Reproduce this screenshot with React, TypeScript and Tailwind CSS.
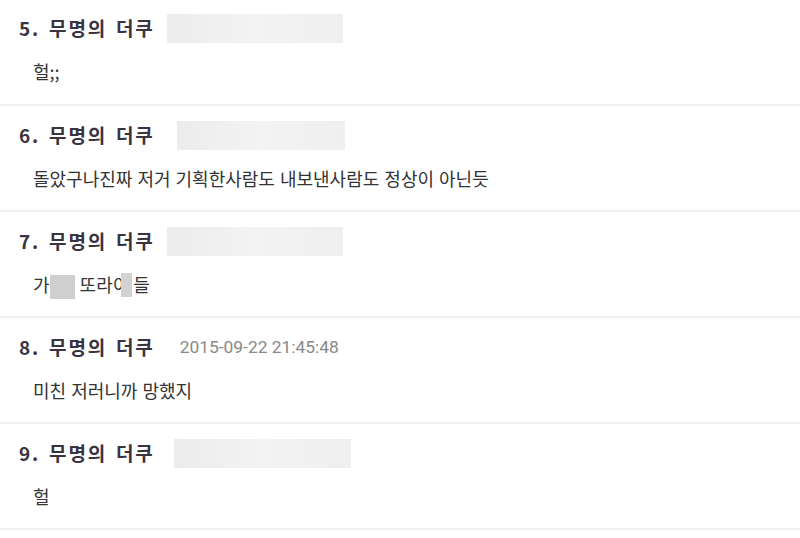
import React from "react";

type Comment = {
  no: number;
  meta: { kind: "blur"; left: number; width: number } | { kind: "date"; text: string };
  body: React.ReactNode;
};

function Censor({ w }: { w: number }) {
  return <span className="inline-block h-[24px] align-middle bg-[#cfcfcf]" style={{ width: w }} />;
}

const comments: Comment[] = [
  { no: 5, meta: { kind: "blur", left: 15, width: 176 }, body: "헐;;" },
  {
    no: 6,
    meta: { kind: "blur", left: 25, width: 168 },
    body: "돌았구나진짜 저거 기획한사람도 내보낸사람도 정상이 아닌듯",
  },
  {
    no: 7,
    meta: { kind: "blur", left: 15, width: 176 },
    body: (
      <>
        가<Censor w={25} /> 또라
        <span className="relative inline-block">
          이
          <span className="absolute right-[-3px] top-[3px] h-[24px] w-[11px] bg-[#d2d2d2]" />
        </span>
        <span className="ml-[4px]">들</span>
      </>
    ),
  },
  { no: 8, meta: { kind: "date", text: "2015-09-22 21:45:48" }, body: "미친 저러니까 망했지" },
  { no: 9, meta: { kind: "blur", left: 22, width: 177 }, body: "헐" },
];

export default function App() {
  return (
    <div className="w-[800px] h-[538px] overflow-hidden bg-white" style={{ fontFamily: '"Noto Sans CJK KR", "Noto Sans", sans-serif' }}>
      {comments.map((c, i) => (
        <div
          key={c.no}
          className={`h-[106px] border-b-2 border-[#efefef] pl-[19px] ${i === 0 ? "pt-[14px]" : "pt-[15px]"}`}
        >
          <div className="flex items-center h-[28px]">
            <span className="text-[19px] font-bold text-[#3a3340] leading-[28px] tracking-[1.8px] [word-spacing:3px]">
              {c.no}. 무명의 더쿠
            </span>
            {c.meta.kind === "blur" ? (
              <span
                className="h-[29px] bg-gradient-to-r from-[#ececec] via-[#f3f3f3] to-[#efefef]"
                style={{ marginLeft: c.meta.left - 3, width: c.meta.width }}
              />
            ) : (
              <span
                className="ml-[25px] text-[17.4px] text-[#888] leading-[28px]"
                style={{ fontFamily: '"Roboto", "Liberation Sans", sans-serif' }}
              >
                {c.meta.text}
              </span>
            )}
          </div>
          <div className="mt-[15px] pl-[14px] h-[28px] leading-[28px] text-[18px] text-[#333] [word-spacing:1px]">
            {c.body}
          </div>
        </div>
      ))}
    </div>
  );
}
